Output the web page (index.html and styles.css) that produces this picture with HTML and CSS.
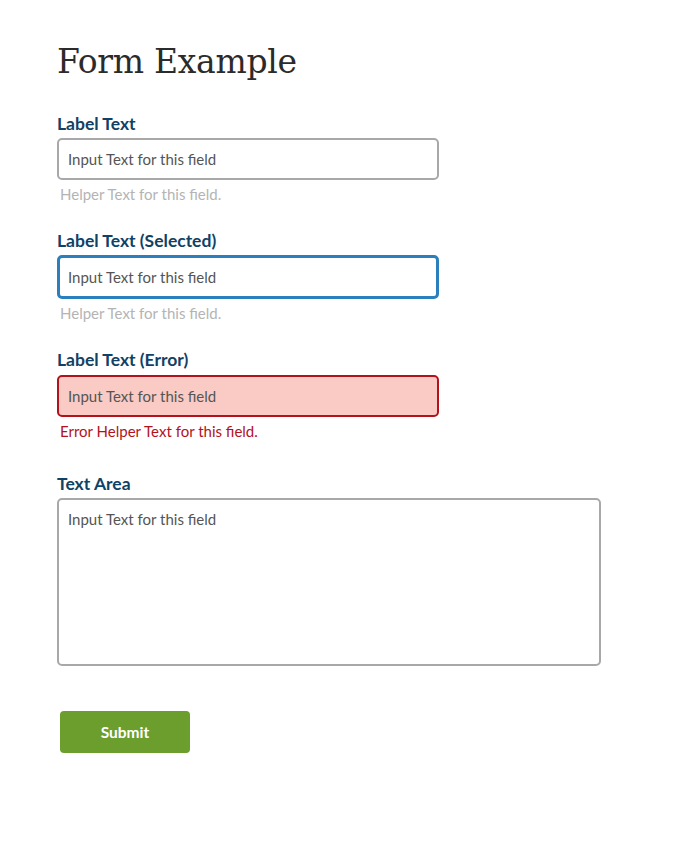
FILE: index.html
```html
<!DOCTYPE html>
<html lang="en">
<head>
<meta charset="utf-8">
<title>Form Example</title>
<link rel="stylesheet" href="styles.css">
</head>
<body>
<main class="page">
  <h1 class="title">Form Example</h1>
  <form class="form">
    <div class="field">
      <label class="label">Label Text</label>
      <div class="input">Input Text for this field</div>
      <p class="helper">Helper Text for this field.</p>
    </div>
    <div class="field">
      <label class="label">Label Text (Selected)</label>
      <div class="input input--selected">Input Text for this field</div>
      <p class="helper">Helper Text for this field.</p>
    </div>
    <div class="field field--error">
      <label class="label">Label Text (Error)</label>
      <div class="input input--error">Input Text for this field</div>
      <p class="helper helper--error">Error Helper Text for this field.</p>
    </div>
    <div class="field field--area">
      <label class="label">Text Area</label>
      <div class="textarea">Input Text for this field</div>
    </div>
    <div class="actions">
      <button type="button" class="submit">Submit</button>
    </div>
  </form>
</main>
</body>
</html>
```

FILE: styles.css
```css
* { box-sizing: border-box; }
html, body { margin: 0; padding: 0; background: #fff; }
body { font-family: "Lato", "Open Sans", sans-serif; }
.page { padding: 39px 0 0 57px; }
.title {
  margin: 0 0 29px 0;
  font-family: "DejaVu Serif", serif;
  font-weight: 400;
  font-size: 33px;
  line-height: 46px;
  color: #2b2b2b;
  letter-spacing: -0.3px;
}
.form { display: flex; flex-direction: column; }
.field { display: flex; flex-direction: column; margin-bottom: 27px; }
.label {
  font-size: 17.5px;
  font-weight: 700;
  color: #0f4266;
  line-height: 20px;
  margin-bottom: 4px;
}
.field--error .label { margin-bottom: 5px; }
.input {
  width: 382px;
  height: 42px;
  border: 2px solid #a8a8a8;
  border-radius: 5px;
  padding: 0 0 0 9px;
  display: flex;
  align-items: center;
  font-size: 15px;
  color: #555;
}
.input--selected { height: 44px; border: 3px solid #2a7fbc; padding-left: 8px; }
.input--error { border-color: #b3121c; background: #f9cbc4; }
.helper {
  margin: 4px 0 0 3px;
  font-size: 15px;
  line-height: 20px;
  color: #b4b4b4;
}
.helper--error { color: #b3121c; }
.field--area { margin-top: 6px; margin-bottom: 0; }
.textarea {
  width: 544px;
  height: 168px;
  border: 2px solid #a8a8a8;
  border-radius: 5px;
  padding: 10px 9px;
  font-size: 15px;
  color: #555;
}
.actions { padding: 45px 0 0 3px; }
.submit {
  width: 130px;
  height: 42px;
  border: none;
  border-radius: 4px;
  background: #6c9e2e;
  color: #fff;
  font-family: "Lato", "Open Sans", sans-serif;
  font-size: 15.5px;
  font-weight: 700;
  cursor: pointer;
}
```
